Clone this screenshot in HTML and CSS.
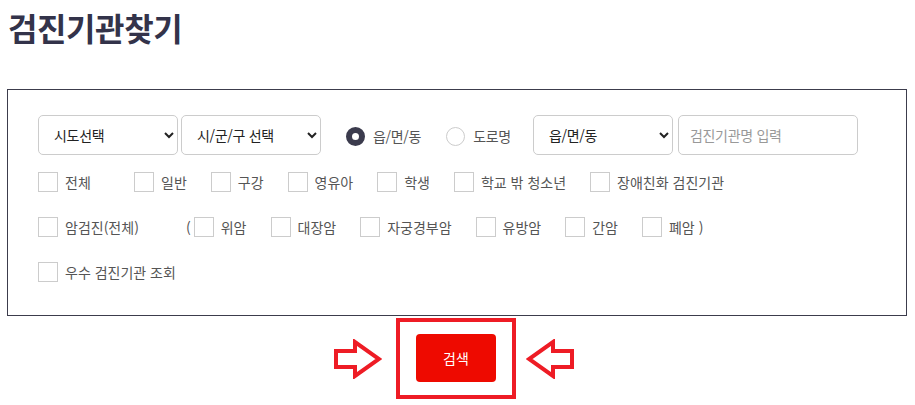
FILE: index.html
```html
<!DOCTYPE html>
<html lang="ko">
<head>
    <meta charset="UTF-8">
    <meta name="viewport" content="width=device-width, initial-scale=1.0">
    <title>검진기관찾기</title>
    <link rel="stylesheet" href="styles.css">
</head>
<body>
    <div class="wrap">
        <h1 class="page-title">검진기관찾기</h1>

        <div class="search-box">
            <div class="search-row">
                <select class="sel">
                    <option>시도선택</option>
                </select>
                <select class="sel sel-gu">
                    <option>시/군/구 선택</option>
                </select>
                <label class="rdo">
                    <input type="radio" name="addrType" checked>
                    <span>읍/면/동</span>
                </label>
                <label class="rdo">
                    <input type="radio" name="addrType">
                    <span>도로명</span>
                </label>
                <select class="sel sel-dong">
                    <option>읍/면/동</option>
                </select>
                <input type="text" class="txt" placeholder="검진기관명 입력">
            </div>

            <div class="check-row">
                <label class="chk chk-first"><input type="checkbox"><span>전체</span></label>
                <label class="chk"><input type="checkbox"><span>일반</span></label>
                <label class="chk"><input type="checkbox"><span>구강</span></label>
                <label class="chk"><input type="checkbox"><span>영유아</span></label>
                <label class="chk"><input type="checkbox"><span>학생</span></label>
                <label class="chk"><input type="checkbox"><span>학교 밖 청소년</span></label>
                <label class="chk"><input type="checkbox"><span>장애친화 검진기관</span></label>
            </div>

            <div class="check-row">
                <label class="chk chk-cancer"><input type="checkbox"><span>암검진(전체)</span></label>
                <span class="paren">(</span>
                <label class="chk"><input type="checkbox"><span>위암</span></label>
                <label class="chk"><input type="checkbox"><span>대장암</span></label>
                <label class="chk"><input type="checkbox"><span>자궁경부암</span></label>
                <label class="chk"><input type="checkbox"><span>유방암</span></label>
                <label class="chk"><input type="checkbox"><span>간암</span></label>
                <label class="chk"><input type="checkbox"><span>폐암 )</span></label>
            </div>

            <div class="check-row">
                <label class="chk"><input type="checkbox"><span>우수 검진기관 조회</span></label>
            </div>
        </div>

        <div class="btn-area">
            <svg class="arrow" width="48" height="40" viewBox="0 0 48 40">
                <polygon points="2,12 21,12 21,3 45,20 21,37 21,28 2,28" />
            </svg>
            <div class="btn-frame">
                <button type="button" class="btn-search">검색</button>
            </div>
            <svg class="arrow" width="48" height="40" viewBox="0 0 48 40">
                <polygon points="46,12 27,12 27,3 3,20 27,37 27,28 46,28" />
            </svg>
        </div>
    </div>
</body>
</html>
```

FILE: styles.css
```css
body {
    margin: 0;
    padding: 0;
    background: #fff;
    font-family: "Noto Sans CJK KR", "Noto Sans", sans-serif;
    color: #555;
}

.wrap {
    padding: 7px 8px 0 7px;
}

.page-title {
    margin: 0 0 0 1px;
    font-size: 32px;
    line-height: 40px;
    letter-spacing: -0.4px;
    font-weight: 700;
    color: #33334a;
}

.search-box {
    margin-top: 42px;
    border: 1px solid #3c3c4c;
    padding: 25px 30px 33px;
}

.search-row {
    display: flex;
    align-items: center;
    height: 40px;
}

.sel {
    width: 140px;
    height: 40px;
    padding: 0 8px 0 11px;
    border: 1px solid #ccc;
    border-radius: 5px;
    background-color: #fff;
    font-family: inherit;
    font-size: 14px;
    letter-spacing: -0.3px;
    color: #222;
}

.sel-gu {
    margin-left: 3px;
}

.sel-dong {
    margin-left: 22px;
}

.rdo {
    display: flex;
    align-items: center;
    gap: 8px;
    margin-left: 25px;
    font-size: 14px;
    letter-spacing: -0.3px;
    color: #555;
    padding-top: 2px;
}

.rdo input {
    appearance: none;
    margin: 0;
    width: 19px;
    height: 19px;
    border: 1px solid #ccc;
    border-radius: 50%;
    background: #fff;
}

.rdo input:checked {
    border: 6px solid #3b3b4d;
    background: #fff;
}

.txt {
    box-sizing: border-box;
    width: 180px;
    height: 40px;
    margin-left: 5px;
    padding: 0 11px;
    border: 1px solid #ccc;
    border-radius: 5px;
    font-family: inherit;
    font-size: 14px;
    letter-spacing: -0.3px;
    color: #222;
}

.txt::placeholder {
    color: #999;
}

.check-row {
    display: flex;
    align-items: center;
    height: 20px;
    margin-top: 25px;
}

.search-row + .check-row {
    margin-top: 17px;
}

.chk {
    display: flex;
    align-items: center;
    gap: 7px;
    margin-right: 24px;
    font-size: 14px;
    color: #555;
}

.chk input {
    appearance: none;
    margin: 0;
    width: 20px;
    height: 20px;
    border: 1px solid #ccc;
    background: #fff;
}

.chk-first {
    width: 72px;
}

.chk-cancer {
    width: 124px;
}

.paren {
    font-size: 14px;
    margin-right: 3px;
    color: #555;
}

.btn-area {
    display: flex;
    justify-content: center;
    align-items: center;
    margin-top: 2px;
    padding-right: 6px;
}

.arrow polygon {
    fill: #fff;
    stroke: #ee1c25;
    stroke-width: 4;
    stroke-linejoin: miter;
}

.arrow:first-child {
    margin-right: 14px;
}

.arrow:last-child {
    margin-left: 10px;
}

.btn-frame {
    border: 4px solid #ee1c25;
    padding: 12px 16px 13px 16px;
}

.btn-search {
    display: block;
    width: 80px;
    height: 48px;
    border: none;
    border-radius: 4px;
    background: #ee0a00;
    color: #fff;
    font-family: inherit;
    font-size: 14px;
    cursor: pointer;
}
```
